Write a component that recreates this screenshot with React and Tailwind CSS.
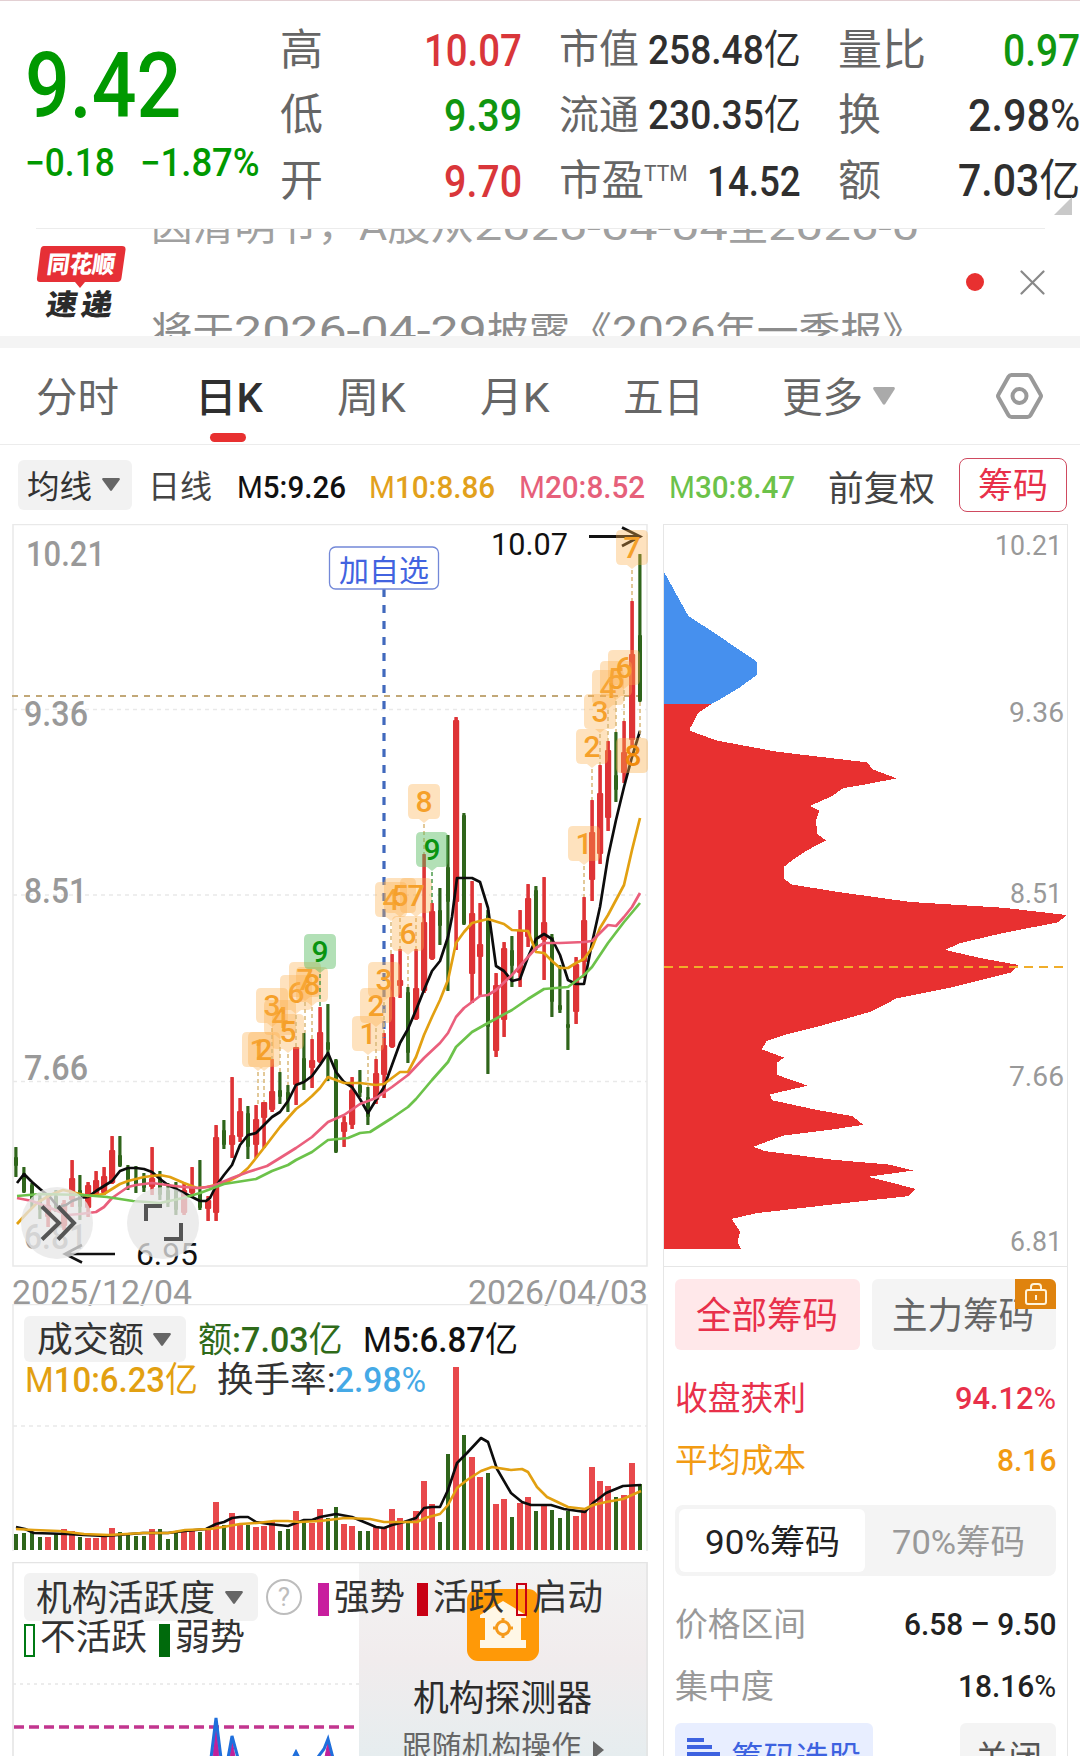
import React, { useLayoutEffect, useRef, useState } from "react";

// Text squeezed (or stretched) horizontally to the width of its box
const Fit = ({ children, className = "" }) => {
  const box = useRef(null);
  const inner = useRef(null);
  const [scale, setScale] = useState(1);

  useLayoutEffect(() => {
    setScale(box.current.clientWidth / inner.current.offsetWidth);
  }, [children]);

  return (
    <span ref={box} className={`block shrink-0 leading-none ${className}`}>
      <span
        ref={inner}
        className="inline-block whitespace-nowrap origin-left leading-none align-top"
        style={{ transform: `scaleX(${scale})` }}
      >
        {children}
      </span>
    </span>
  );
};

const Caret = ({ className = "" }) => (
  <svg className={className} viewBox="0 0 18 13" preserveAspectRatio="none">
    <path d="M1 0H17Q18.500 .5 17.500 2L10 12.300Q9 13.500 8 12.300L.5 2Q-.5 .5 1 0Z" fill="currentColor" />
  </svg>
);

// [up, high, low, body top, body bottom]
const candles = [
  [0, 1147, 1177, 1157, 1166], [0, 1167, 1193, 1173, 1192], [0, 1183, 1208, 1185, 1200], [0, 1193, 1219, 1198, 1210],
  [1, 1198, 1227, 1205, 1217], [0, 1190, 1212, 1196, 1208], [1, 1200, 1230, 1203, 1226], [1, 1160, 1207, 1178, 1200],
  [0, 1175, 1220, 1190, 1207], [1, 1182, 1217, 1185, 1208], [1, 1171, 1195, 1180, 1194], [1, 1167, 1195, 1176, 1193],
  [1, 1136, 1184, 1150, 1183], [0, 1136, 1167, 1155, 1166], [0, 1165, 1190, 1168, 1180], [0, 1166, 1193, 1178, 1186],
  [0, 1173, 1192, 1178, 1188], [1, 1147, 1195, 1178, 1187], [0, 1171, 1200, 1178, 1195], [0, 1183, 1207, 1190, 1203],
  [0, 1182, 1215, 1190, 1210], [1, 1183, 1215, 1190, 1213], [1, 1167, 1197, 1187, 1193], [0, 1160, 1210, 1193, 1208],
  [1, 1196, 1221, 1200, 1209], [1, 1125, 1221, 1137, 1213], [0, 1120, 1149, 1130, 1145], [1, 1077, 1158, 1135, 1145],
  [1, 1098, 1142, 1111, 1137], [0, 1106, 1159, 1113, 1147], [1, 1105, 1158, 1119, 1145], [1, 1102, 1148, 1102, 1118],
  [1, 1059, 1112, 1091, 1110], [0, 1072, 1104, 1090, 1097], [0, 1085, 1112, 1092, 1100], [1, 1047, 1105, 1047, 1085],
  [0, 1033, 1090, 1058, 1082], [1, 1039, 1088, 1060, 1068], [1, 1007, 1063, 1032, 1062], [0, 1004, 1081, 1042, 1050],
  [0, 1059, 1153, 1060, 1152], [1, 1116, 1147, 1122, 1132], [1, 1077, 1129, 1090, 1125], [0, 1070, 1097, 1085, 1093],
  [0, 1087, 1125, 1097, 1117], [1, 1059, 1104, 1073, 1100], [1, 1033, 1098, 1045, 1075], [1, 954, 1048, 997, 1047],
  [1, 949, 998, 980, 986], [0, 987, 1063, 992, 1053], [1, 949, 1020, 988, 1019], [1, 854, 993, 922, 991],
  [1, 903, 960, 911, 959], [0, 888, 945, 910, 926], [0, 835, 991, 867, 902], [1, 717, 950, 720, 902],
  [0, 813, 925, 815, 924], [1, 881, 1003, 913, 974], [1, 903, 996, 944, 957], [0, 910, 1074, 915, 1027],
  [1, 973, 1057, 985, 1051], [1, 942, 1037, 948, 1020], [0, 936, 987, 950, 966], [1, 910, 987, 930, 973],
  [1, 884, 947, 898, 937], [0, 886, 950, 890, 948], [1, 877, 980, 922, 940], [0, 934, 1017, 937, 1002],
  [0, 965, 1013, 1005, 1010], [0, 990, 1050, 1024, 1028], [1, 957, 1024, 964, 1012], [1, 897, 978, 920, 962],
  [1, 800, 901, 832, 880], [1, 765, 864, 793, 854], [1, 741, 831, 750, 818], [0, 732, 802, 775, 790],
  [1, 721, 783, 752, 773], [1, 601, 747, 654, 740], [0, 554, 702, 635, 701],
];

// turnover bar tops
const volumes = [
  1534, 1533, 1532, 1537, 1537, 1533, 1529, 1531, 1537, 1538, 1538, 1536, 1528, 1532, 1534, 1536, 1536, 1529, 1529, 1539,
  1531, 1530, 1530, 1532, 1529, 1502, 1525, 1513, 1525, 1525, 1527, 1526, 1521, 1531, 1529, 1511, 1520, 1523, 1509, 1518,
  1507, 1524, 1526, 1531, 1531, 1526, 1527, 1509, 1518, 1522, 1511, 1481, 1504, 1522, 1454, 1367, 1435, 1457, 1477, 1473,
  1504, 1499, 1517, 1503, 1497, 1511, 1506, 1510, 1518, 1511, 1516, 1510, 1467, 1481, 1486, 1497, 1495, 1463, 1484,
];

const ma5 =
  "17,1183 24,1174 32,1182 40,1189 50,1197 58,1207 66,1205 72,1201 80,1198 88,1197 96,1191 104,1186 112,1181 120,1171 128,1168 136,1168 144,1169 152,1172 160,1179 168,1185 176,1189 184,1193 192,1197 200,1201 206,1201 210,1198 216,1186 224,1175 232,1165 240,1145 248,1135 256,1133 264,1125 272,1117 280,1112 288,1101 296,1085 304,1082 312,1076 320,1065 328,1053 336,1072 344,1082 352,1087 360,1099 368,1113 376,1100 384,1087 392,1065 400,1043 408,1029 416,1010 424,990 432,971 440,961 448,937 452,917 457,878 472,878 480,882 488,908 496,966 504,971 512,981 520,979 528,957 536,939 544,934 552,939 560,955 568,980 576,984 584,984 592,943 600,907 608,857 616,820 624,787 632,757 640,731";
const ma10 =
  "17,1224 27,1213 37,1203 50,1195 63,1190 72,1192 88,1196 104,1194 112,1189 120,1184 128,1181 144,1177 160,1175 170,1177 184,1183 197,1188 207,1187 227,1182 240,1175 248,1168 256,1158 267,1144 280,1127 296,1109 304,1103 312,1096 320,1088 328,1077 336,1080 344,1083 360,1083 376,1085 384,1084 400,1072 408,1072 416,1057 424,1035 432,1017 440,1000 448,980 456,943 464,932 472,923 488,919 504,924 512,930 528,931 536,952 544,953 552,961 560,968 568,968 576,963 584,959 592,948 600,928 608,915 624,885 632,850 640,818";
const ma20 =
  "17,1198 32,1201 48,1207 67,1215 80,1214 96,1212 104,1207 112,1198 128,1187 136,1185 152,1183 167,1185 183,1187 200,1188 213,1186 232,1178 248,1172 267,1166 280,1158 296,1148 312,1137 328,1122 344,1115 360,1104 376,1098 392,1087 408,1075 424,1058 440,1043 448,1033 456,1017 464,1008 480,996 488,995 496,990 512,975 528,957 536,948 544,943 560,943 584,942 592,941 600,933 608,925 616,926 624,917 632,907 640,893";
const ma30 =
  "17,1196 40,1194 83,1195 107,1197 133,1201 160,1203 183,1198 200,1193 224,1184 256,1179 272,1171 288,1165 296,1160 312,1152 328,1140 348,1138 360,1133 370,1132 392,1118 408,1107 416,1099 432,1080 448,1062 456,1047 472,1032 488,1023 512,1010 528,999 544,989 568,987 584,975 592,967 608,943 624,922 640,903";

const vol5 =
  "16,1527 25,1529 34,1533 67,1534 84,1535 105,1536 143,1533 168,1533 185,1531 206,1529 216,1524 224,1522 232,1518 240,1517 248,1517 256,1522 269,1524 288,1526 296,1523 304,1520 312,1520 320,1517 336,1514 352,1517 364,1522 376,1527 384,1528 392,1525 404,1522 416,1518 424,1508 432,1507 440,1507 448,1490 457,1463 467,1453 481,1438 488,1442 497,1469 511,1493 522,1502 531,1505 551,1505 564,1509 585,1512 593,1503 606,1493 623,1486 641,1485";
const vol10 =
  "16,1529 34,1530 59,1531 84,1534 109,1535 143,1533 168,1533 185,1530 210,1529 223,1527 240,1524 257,1523 274,1521 288,1521 299,1522 320,1521 345,1518 370,1519 384,1522 404,1522 417,1522 425,1518 440,1514 448,1505 457,1488 467,1480 481,1471 492,1467 511,1470 522,1469 528,1472 537,1487 547,1497 568,1507 585,1509 593,1505 606,1502 623,1499 641,1491";

// [digit, center x, top, bottom of the leader line]
const badges = [
  [1, 258, 1032, 1105], [2, 264, 1032, 1102], [3, 272, 988, 1059], [4, 280, 1000, 1072], [5, 288, 1014, 1085],
  [6, 296, 975, 1047], [7, 305, 962, 1033], [8, 312, 967, 1039], [1, 368, 1016, 1087], [2, 376, 988, 1059],
  [3, 384, 962, 1033], [4, 391, 882, 954], [5, 400, 878, 949], [7, 416, 878, 949], [6, 408, 916, 987],
  [8, 424, 784, 854], [1, 584, 826, 897], [2, 592, 729, 800], [3, 600, 694, 765], [4, 608, 670, 741],
  [5, 616, 661, 732], [6, 624, 650, 721], [7, 632, 530, 601],
];

const Badge = ({ digit, x, y, end, green }) => (
  <g>
    <line x1={x} x2={x} y1={y + 40} y2={end} stroke={green ? "#4c9a4c" : "#d9b878"} strokeWidth="1.500" strokeDasharray="4 3" />
    <path
      d={`M${x - 11} ${y}h22q5 0 5 5v25q0 5 -5 5h-6l-5 4l-5 -4h-6q-5 0 -5 -5v-25q0 -5 5 -5z`}
      fill={green ? "#54bb5e" : "#fbb04c"}
      fillOpacity={green ? 0.45 : 0.36}
    />
    <text x={x} y={y + 27.5} textAnchor="middle" fontSize="30" fontWeight="500" fill={green ? "#0a9410" : "#f5a02a"}>
      {digit}
    </text>
  </g>
);

const AxisText = ({ x, y, w, size, children, ...rest }) => (
  <text x={x} y={y} fontSize={size} textLength={w} lengthAdjust="spacingAndGlyphs" {...rest}>
    {children}
  </text>
);

const KChart = () => (
  <svg className="block w-[636px] h-[743px]" viewBox="12 524 636 743">
    <rect x="13" y="524.500" width="634" height="741.500" fill="#fff" stroke="#e9e9e9" strokeWidth="1.500" />
    {[709.5, 895, 1081.5].map((y) => (
      <line key={y} x1="13" x2="647" y1={y} y2={y} stroke="#e9e9e9" strokeWidth="1.500" strokeDasharray="4 4" />
    ))}
    <line x1="12" x2="641" y1="696" y2="696" stroke="#c2a878" strokeWidth="2" strokeDasharray="6 6" />
    <g fill="#999" fontWeight="500">
      <AxisText x={26} y={566} w={79} size={35}>10.21</AxisText>
      <AxisText x={24} y={726} w={64} size={35}>9.36</AxisText>
      <AxisText x={24} y={903} w={63} size={35}>8.51</AxisText>
      <AxisText x={24} y={1080} w={64} size={35}>7.66</AxisText>
      <AxisText x={24} y={1248.5} w={63} size={35}>6.81</AxisText>
    </g>
    {candles.map(([up, high, low, top, bottom], i) => (
      <g key={i} fill={up ? "#de3336" : "#2f651b"}>
        <rect x={16 + i * 8 - 1.7} y={high} width={up ? 3.6 : 3.2} height={low - high} rx="0.500" />
        <rect x={16 + i * 8 - (up ? 3 : 2)} y={top} width={up ? 6.2 : 4} height={bottom - top} rx="1" />
      </g>
    ))}
    <g fill="none" strokeWidth="2.700" strokeLinejoin="round">
      <polyline points={ma5} stroke="#0c0c0c" />
      <polyline points={ma10} stroke="#e2a011" />
      <polyline points={ma20} stroke="#ea5f7c" />
      <polyline points={ma30} stroke="#6cc24a" />
    </g>
    <line x1="384" x2="384" y1="589" y2="1038" stroke="#4169bd" strokeWidth="3.200" strokeDasharray="8 8" />
    <rect x="329.500" y="547" width="109" height="42" rx="6" fill="#fff" stroke="#7388d8" strokeWidth="1.300" />
    <AxisText x={339} y={581} w={90} size={30} fill="#4263e0">加自选</AxisText>
    <AxisText x={491} y={555} w={77} size={31} fill="#111">10.07</AxisText>
    <path d="M589 536.500H640M622 527.500L640 536.500L622 546" fill="none" stroke="#111" strokeWidth="2.800" />
    {badges.map(([digit, x, y, end], i) => (
      <Badge key={i} digit={digit} x={x} y={y} end={end} />
    ))}
    <Badge digit={9} x={320} y={934} end={1007} green />
    <Badge digit={9} x={432} y={832} end={903} green />
    <line x1="640" x2="640" y1="702" y2="738" stroke="#d9b878" strokeWidth="1.500" strokeDasharray="4 3" />
    <path d="M621 738h22q5 0 5 5v25q0 5 -5 5h-22q-5 0 -5 -5v-25q0 -5 5 -5z" fill="#fbb04c" fillOpacity="0.400" />
    <text x="633" y="766" textAnchor="middle" fontSize="30" fontWeight="500" fill="#f08a0c">8</text>
    <AxisText x={136} y={1264.5} w={62} size={31} fill="#111">6.95</AxisText>
    <path d="M115 1254H65M82 1245L65 1254L82 1262.500" fill="none" stroke="#111" strokeWidth="2.600" />
    <g fill="#e6e6e6" fillOpacity="0.760">
      <circle cx="57" cy="1223" r="36" />
      <circle cx="163" cy="1223" r="36" />
    </g>
    <g fill="none" stroke="#555" strokeWidth="4">
      <path d="M42 1206.500L59 1223L42 1239.500M58 1206.500L74 1223L58 1239.500" />
      <path d="M146 1221V1206H162M181 1223V1239H164" />
    </g>
  </svg>
);

const chips =
  "42,380 183,380 145,398 120,430 120,435 200,455 380,478 650,500 670,515 740,533 650,545 580,553 545,570 480,590 508,600 498,620 502,648 528,661 470,682 425,703 403,715 401,740 425,752 570,768 780,788 1060,800 1250,815 1225,830 1060,852 930,873 885,887 1000,905 1105,918 1085,933 900,965 740,987 660,1015 520,1042 400,1063 350,1075 335,1092 402,1109 380,1120 382,1145 473,1167 360,1185 366,1197 500,1217 608,1230 640,1248 540,1258 400,1270 310,1293 345,1302 550,1320 720,1330 790,1342 655,1355 797,1380 775,1395 600,1408 320,1430 245,1442 270,1468 263,1490 272,1503 42,1503";

const ChipChart = () => (
  <svg className="block w-[403px] h-[741px]" viewBox="664 525 403 741">
    <g transform="translate(650 520) scale(0.3333 0.4847)" shapeRendering="crispEdges">
      <polygon points="42,107 115,198 180,227 318,291 320,293 320,320 270,345 215,368 183,380 42,380" fill="#4690ee" />
      <polygon points={chips} fill="#e83030" />
    </g>
    <line x1="664" x2="1064" y1="967" y2="967" stroke="#f0ad2a" strokeWidth="2" strokeDasharray="9 6" />
    <g fill="#999">
      <AxisText x={995} y={555} w={67} size={28}>10.21</AxisText>
      <AxisText x={1009} y={721.5} w={55} size={28}>9.36</AxisText>
      <AxisText x={1010} y={903} w={52} size={28}>8.51</AxisText>
      <AxisText x={1009} y={1085.5} w={55} size={28}>7.66</AxisText>
      <AxisText x={1010} y={1251} w={52} size={28}>6.81</AxisText>
    </g>
  </svg>
);

const VolumeChart = () => (
  <svg className="absolute inset-0 w-full h-full" viewBox="12 1304 636 247">
    <path d="M13 1551V1304.500H647V1551" fill="none" stroke="#e9e9e9" strokeWidth="1.500" />
    <line x1="13" x2="647" y1="1426" y2="1426" stroke="#e9e9e9" strokeWidth="1.500" strokeDasharray="4 4" />
    {volumes.map((top, i) => (
      <rect
        key={i}
        x={16 + i * 8 - (candles[i][0] ? 3 : 2)}
        y={top}
        width={candles[i][0] ? 6 : 4}
        height={1550 - top}
        fill={candles[i][0] ? "#e8494c" : "#2f651b"}
      />
    ))}
    <g fill="none" strokeWidth="2.600" strokeLinejoin="round">
      <polyline points={vol5} stroke="#0c0c0c" />
      <polyline points={vol10} stroke="#e2a011" />
    </g>
  </svg>
);

const ActivityChart = () => (
  <svg className="absolute inset-0 w-full h-full" viewBox="12 1562 636 194">
    <path d="M13 1757V1562.500H647V1757" fill="none" stroke="#e4e4e4" strokeWidth="1.500" />
    <line x1="13" x2="359" y1="1684" y2="1684" stroke="#e6e6e6" strokeWidth="1.500" strokeDasharray="3 4" />
    <line x1="14" x2="355" y1="1727" y2="1727" stroke="#c2358f" strokeWidth="3.400" strokeDasharray="10 5" />
    <path d="M213 1757L216 1722L219 1757ZM230 1757L232 1740L235 1757ZM325 1757L328 1742L331 1757Z" fill="#c0219a" stroke="#c0219a" />
    <path
      d="M211 1758L216 1718L221 1758M228 1758L232 1736L238 1758M293 1758L296 1752L299 1758M318 1757L324 1749L328 1739L333 1758"
      fill="none"
      stroke="#1f6fdc"
      strokeWidth="3"
    />
  </svg>
);

const Logo = () => (
  <svg className="w-[90px] h-[78px]" viewBox="0 0 90 78">
    <path d="M8 1H86Q90 1 89.500 5L85.500 33Q85 37 81 37H49L44 43L39 37H4Q.5 37 1 33L4.500 5Q5 1 8 1Z" fill="#e63036" />
    <text x="14" y="28.500" transform="skewX(-8)" fontSize="24" fontWeight="900" fill="#fff" textLength="68" lengthAdjust="spacingAndGlyphs">同花顺</text>
    <text x="20" y="70" transform="skewX(-9)" fontSize="29" fontWeight="900" fill="#2b2b2b" textLength="31" lengthAdjust="spacingAndGlyphs">速</text>
    <text x="55" y="70" transform="skewX(-9)" fontSize="29" fontWeight="900" fill="#2b2b2b" textLength="31" lengthAdjust="spacingAndGlyphs">递</text>
  </svg>
);

const Quote = () => (
  <section className="relative flex h-[228px] pt-[16px] border-t border-[#e3d0d3] text-[#2f2f2f]">
    <div className="w-[280px] pl-[25px] pt-[24px] text-[#009900]">
      <Fit className="w-[156px] text-[91px] font-medium">9.42</Fit>
      <div className="flex gap-[25px] mt-[12px] font-medium">
        <Fit className="w-[90px] text-[38px]">−0.18</Fit>
        <Fit className="w-[120px] text-[38px]">−1.87%</Fit>
      </div>
    </div>
    <div className="w-[242px]">
      <div className="flex h-[66px] items-center justify-between">
        <Fit className="w-[43px] text-[43px] text-[#666]">高</Fit>
        <Fit className="w-[98px] text-[45px] font-medium text-[#d9363a]">10.07</Fit>
      </div>
      <div className="flex h-[65px] items-center justify-between">
        <Fit className="w-[43px] text-[43px] text-[#666]">低</Fit>
        <Fit className="w-[78px] text-[45px] font-medium text-[#109610]">9.39</Fit>
      </div>
      <div className="flex h-[66px] items-center justify-between">
        <Fit className="w-[43px] text-[43px] text-[#666]">开</Fit>
        <Fit className="w-[78px] text-[45px] font-medium text-[#d9363a]">9.70</Fit>
      </div>
    </div>
    <div className="w-[242px] ml-[37px]">
      <div className="flex h-[66px] items-center justify-between">
        <Fit className="w-[80px] text-[40px] text-[#666]">市值</Fit>
        <Fit className="w-[153px] text-[41px] font-medium">258.48<span className="font-normal">亿</span></Fit>
      </div>
      <div className="flex h-[65px] items-center justify-between">
        <Fit className="w-[80px] text-[40px] text-[#666]">流通</Fit>
        <Fit className="w-[153px] text-[41px] font-medium">230.35<span className="font-normal">亿</span></Fit>
      </div>
      <div className="flex h-[66px] items-center">
        <Fit className="w-[85px] text-[42px] text-[#666]">市盈</Fit>
        <Fit className="w-[44px] text-[22px] text-[#666] -mt-3.5">TTM</Fit>
        <Fit className="w-[94px] text-[43px] font-medium ml-auto">14.52</Fit>
      </div>
    </div>
    <div className="w-[242px] ml-[37px]">
      <div className="flex h-[66px] items-center justify-between">
        <Fit className="w-[88px] text-[43px] text-[#666]">量比</Fit>
        <Fit className="w-[77px] text-[45px] font-medium text-[#109610]">0.97</Fit>
      </div>
      <div className="flex h-[65px] items-center justify-between">
        <Fit className="w-[43px] text-[43px] text-[#666]">换</Fit>
        <Fit className="w-[112px] text-[45px] font-medium">2.98<span className="font-normal">%</span></Fit>
      </div>
      <div className="flex h-[66px] items-center justify-between">
        <Fit className="w-[43px] text-[43px] text-[#666]">额</Fit>
        <Fit className="w-[122px] text-[44px] font-medium">7.03<span className="font-normal">亿</span></Fit>
      </div>
    </div>
    <svg className="absolute right-2 bottom-[13px] w-[18px] h-[18px]" viewBox="0 0 18 18">
      <path d="M18 0V18H0Z" fill="#c9c9c9" />
    </svg>
  </section>
);

const Notice = () => (
  <section className="flex h-[108px] pl-[36px] pr-[35px] overflow-hidden">
    <div className="flex w-full h-full border-t border-[#ececec]">
      <div className="pt-[16px] w-[90px] shrink-0">
        <Logo />
      </div>
      <div className="ml-[25px] w-[772px] shrink-0 h-[107px] overflow-hidden text-[38px]">
        <div className="flex -mt-[21px] text-[#a0a0a0]">
          <Fit className="w-[208px]">因清明节，</Fit>
          <Fit className="w-[115px]">A股从</Fit>
          <Fit className="w-[254px]">2026-04-04</Fit>
          <Fit className="w-[40px]">至</Fit>
          <Fit className="w-[151px]">2026-0</Fit>
        </div>
        <div className="flex mt-[66px] text-[#8c8c8c]">
          <Fit className="w-[83px]">将于</Fit>
          <Fit className="w-[253px]">2026-04-29</Fit>
          <Fit className="w-[125px]">披露《</Fit>
          <Fit className="w-[103px]">2026</Fit>
          <Fit className="w-[209px]">年一季报》</Fit>
        </div>
      </div>
      <div className="ml-auto flex items-center gap-[36px] h-[106px]">
        <span className="w-[18px] h-[18px] rounded-full bg-[#e83030]"></span>
        <svg className="w-[25px] h-[25px]" viewBox="0 0 25 25">
          <path d="M1.500 1.500L23.500 23.500M23.500 1.500L1.500 23.500" stroke="#888" strokeWidth="2.200" strokeLinecap="round" />
        </svg>
      </div>
    </div>
  </section>
);

const Tabs = () => (
  <nav className="flex h-[97px] items-center pl-[36px] border-b-[1.5px] border-[#ececec] text-[41px] text-[#666]">
    <Fit className="w-[83px] mt-[5px]">分时</Fit>
    <div className="relative ml-[76px] mt-[5px] text-[#2f2f2f]">
      <Fit className="w-[68px] font-medium">日K</Fit>
      <span className="absolute left-[15px] top-[55px] w-[36px] h-[9px] rounded-full bg-[#e83030]"></span>
    </div>
    <Fit className="w-[69px] ml-[74px] mt-[5px]">周K</Fit>
    <Fit className="w-[70px] ml-[74px] mt-[5px]">月K</Fit>
    <Fit className="w-[81px] ml-[73px] mt-[5px]">五日</Fit>
    <Fit className="w-[81px] ml-[78px] mt-[5px]">更多</Fit>
    <Caret className="w-[22px] h-[18px] ml-[10px] text-[#aaa]" />
    <svg className="w-[49px] h-[48px] ml-[100px]" viewBox="0 0 49 48" fill="none" stroke="#999" strokeWidth="4">
      <path d="M16.500 3H32.500Q34.500 3 35.500 4.700L45.500 22.500Q46.500 24 45.500 25.500L35.500 43.300Q34.500 45 32.500 45H16.500Q14.500 45 13.500 43.300L3.500 25.500Q2.500 24 3.500 22.500L13.500 4.700Q14.500 3 16.500 3Z" />
      <circle cx="24.500" cy="24" r="7" />
    </svg>
  </nav>
);

const Averages = () => (
  <div className="flex h-[79px] items-center pl-[18px] text-[32px] font-medium">
    <button className="flex items-center w-[114px] h-[50px] pl-[9px] rounded-md bg-[#f2f2f2] text-[#333] font-normal">
      <Fit className="w-[65px] mt-[4px] text-[32px]">均线</Fit>
      <Caret className="w-[18px] h-[13px] ml-[10px] text-[#666]" />
    </button>
    <Fit className="w-[64px] mt-[4px] font-normal text-[#444] ml-[16px]">日线</Fit>
    <Fit className="w-[109px] mt-[5px] ml-[25px] text-[#111]"><span className="font-normal">M</span>5:9.26</Fit>
    <Fit className="w-[126px] mt-[5px] ml-[23px] text-[#e2a11c]"><span className="font-normal">M</span>10:8.86</Fit>
    <Fit className="w-[126px] mt-[5px] ml-[24px] text-[#e6607a]"><span className="font-normal">M</span>20:8.52</Fit>
    <Fit className="w-[126px] mt-[5px] ml-[24px] text-[#6cc24a]"><span className="font-normal">M</span>30:8.47</Fit>
    <Fit className="w-[107px] mt-[10px] ml-[33px] text-[35px] font-normal text-[#444]">前复权</Fit>
    <button className="flex items-center justify-center w-[108px] h-[54px] ml-[24px] rounded-lg border-[1.5px] border-[#cf4a60] text-[#e8304a]">
      <Fit className="w-[70px] mt-[4px] text-[35px] font-normal">筹码</Fit>
    </button>
  </div>
);

const Volume = () => (
  <div className="relative h-[247px] pl-[12px] pt-[12px] text-[35px] font-medium">
    <VolumeChart />
    <div className="relative flex items-center h-[46px]">
      <button className="flex items-center w-[162px] h-[46px] pl-[12px] rounded-md bg-[#f2f2f2] text-[#333]">
        <Fit className="w-[107px] mt-[3px] font-normal">成交额</Fit>
        <Caret className="w-[18px] h-[13px] ml-[10px] text-[#666]" />
      </button>
      <Fit className="w-[145px] mt-[3px] ml-[12px] text-[#2f6b1a]"><span className="font-normal">额</span>:7.03<span className="font-normal">亿</span></Fit>
      <Fit className="w-[155px] mt-[3px] ml-[20px] text-[#111]"><span className="font-normal">M</span>5:6.87<span className="font-normal">亿</span></Fit>
    </div>
    <div className="relative flex items-center h-[36px]">
      <Fit className="w-[173px] ml-[1px] text-[#e2a011]"><span className="font-normal">M</span>10:6.23<span className="font-normal">亿</span></Fit>
      <Fit className="w-[118px] ml-[19px] font-normal text-[#333]">换手率:</Fit>
      <Fit className="w-[91px] text-[#45a9e6]">2.98<span className="font-normal">%</span></Fit>
    </div>
  </div>
);

const Activity = () => (
  <div className="relative h-[194px] mt-[11px] text-[36px] text-[#333]">
    <div className="absolute left-[347px] top-0 w-[289px] h-[194px] bg-linear-to-b from-[#f3f3f3] via-[#f1eced] to-[#e6edef] flex flex-col items-center">
      <svg className="w-[72px] h-[72px] mt-[27px] mr-[2px] shrink-0" viewBox="0 0 72 72">
        <rect width="72" height="72" rx="11" fill="#ff9907" />
        <path d="M36 12L59 26V29H54V51H59V59H13V51H18V29H13V26Z" fill="#fff7e6" />
        <g fill="none" stroke="#f59a1c" strokeWidth="3">
          <circle cx="36" cy="39" r="6.500" />
          <path d="M36 29V33M36 45V49M26 39H30M42 39H46" />
        </g>
      </svg>
      <Fit className="w-[179px] mt-[20px] mr-[2px] text-[#2b2b2b]">机构探测器</Fit>
      <div className="flex items-center mt-[15px] mr-[1px]">
        <Fit className="w-[179px] text-[31px] text-[#666]">跟随机构操作</Fit>
        <svg className="w-[11px] h-[18px] ml-[12px] mt-1" viewBox="0 0 11 18">
          <path d="M0 0L11 9L0 18Z" fill="#666" />
        </svg>
      </div>
    </div>
    <ActivityChart />
    <div className="relative flex items-center h-[48px] top-[11px] pl-[12px]">
      <button className="flex items-center w-[234px] h-[48px] pl-[12px] rounded-md bg-[#f2f2f2]">
        <Fit className="w-[179px] mt-[3px]">机构活跃度</Fit>
        <Caret className="w-[18px] h-[13px] ml-[10px] text-[#666]" />
      </button>
      <span className="flex items-center justify-center w-[36px] h-[36px] ml-[8px] rounded-full border-2 border-[#bdbdbd] text-[#bdbdbd] text-[26px] leading-none">?</span>
      <span className="w-[11px] h-[33px] ml-[16px] mt-1 bg-[#c81e9e]"></span>
      <Fit className="w-[71px] mt-[2px] ml-[5px]">强势</Fit>
      <span className="w-[11px] h-[33px] ml-[12px] mt-1 bg-[#c80014]"></span>
      <Fit className="w-[71px] mt-[2px] ml-[5px]">活跃</Fit>
      <span className="w-[11px] h-[33px] ml-[12px] mt-1 border-[2.500px] border-[#c80014]"></span>
      <Fit className="w-[71px] mt-[2px] ml-[5px]">启动</Fit>
    </div>
    <div className="relative flex items-center h-[34px] top-[11px] pl-[12px]">
      <span className="w-[11px] h-[33px] mt-1 border-[2.500px] border-[#007a14]"></span>
      <Fit className="w-[107px] ml-[5px]">不活跃</Fit>
      <span className="w-[11px] h-[33px] ml-[12px] mt-1 bg-[#006a0c]"></span>
      <Fit className="w-[70px] ml-[5px]">弱势</Fit>
    </div>
  </div>
);

const ChipPanel = () => (
  <aside className="w-[405px] ml-[15px] h-[1232px] border-[1.5px] border-b-0 border-[#e6e6e6]">
    <ChipChart />
    <div className="border-t border-[#e6e6e6] pl-[11px] pr-[11px] pt-[12px]">
      <div className="flex gap-[12px] h-[71px]">
        <button className="flex-1 flex items-center justify-center rounded-md bg-[#ffe8ea] text-[#e8304a]">
          <Fit className="w-[142px] mt-[4px] text-[37px]">全部筹码</Fit>
        </button>
        <button className="relative flex-1 flex items-center justify-center rounded-md bg-[#f4f4f4] text-[#666]">
          <Fit className="w-[142px] mt-[4px] mr-[2px] text-[37px]">主力筹码</Fit>
          <span className="absolute right-0 top-0 flex items-center justify-center w-[41px] h-[30px] rounded-tr-md bg-[#df830e]">
            <svg className="w-[24px] h-[24px]" viewBox="0 0 24 24" fill="none" stroke="#fff3da" strokeWidth="2">
              <rect x="2" y="8" width="20" height="14" rx="2" />
              <path d="M7 8V5Q7 2 10 2H14Q17 2 17 5V8M12 13V18" />
            </svg>
          </span>
        </button>
      </div>
      <div className="flex items-center justify-between h-[62px] mt-[17px] text-[#e8304a]">
        <Fit className="w-[131px] text-[33px]">收盘获利</Fit>
        <Fit className="w-[101px] text-[32px] font-medium">94.12<span className="font-normal">%</span></Fit>
      </div>
      <div className="flex items-center justify-between h-[62px] text-[#f29b13]">
        <Fit className="w-[131px] text-[33px]">平均成本</Fit>
        <Fit className="w-[59px] text-[32px] font-medium">8.16</Fit>
      </div>
      <div className="flex h-[71px] mt-[14px] p-[4px] rounded-lg bg-[#f4f4f4]">
        <div className="flex items-center justify-center w-[186px] rounded-md bg-white text-[#222]">
          <Fit className="w-[135px] mt-[2px] text-[34px]">90%筹码</Fit>
        </div>
        <div className="flex flex-1 items-center justify-center text-[#999]">
          <Fit className="w-[133px] mt-[2px] text-[34px]">70%筹码</Fit>
        </div>
      </div>
      <div className="flex items-center justify-between h-[62px] mt-[17px]">
        <Fit className="w-[131px] text-[33px] text-[#999]">价格区间</Fit>
        <Fit className="w-[152px] text-[32px] font-medium text-[#222]">6.58 – 9.50</Fit>
      </div>
      <div className="flex items-center justify-between h-[62px]">
        <Fit className="w-[99px] text-[33px] text-[#999]">集中度</Fit>
        <Fit className="w-[98px] text-[32px] font-medium text-[#222]">18.16<span className="font-normal">%</span></Fit>
      </div>
      <div className="flex justify-between h-[72px] mt-[6px]">
        <button className="flex items-center w-[198px] pl-[12px] rounded-md bg-[#e8eeff] text-[#3d62e0]">
          <svg className="w-[33px] h-[38px] mb-[5px]" viewBox="0 0 33 38" fill="#3d62e0">
            <path d="M0 0H17V4H0ZM0 7H25V11H0ZM0 14H33V18H0ZM0 21H25V25H0ZM0 28H17V32H0Z" />
          </svg>
          <Fit className="w-[130px] ml-[11px] mb-[2px] text-[33px]">筹码选股</Fit>
        </button>
        <button className="flex items-center justify-center w-[96px] rounded-md bg-[#f4f4f4] text-[#555]">
          <Fit className="w-[67px] mb-[2px] text-[34px]">关闭</Fit>
        </button>
      </div>
    </div>
  </aside>
);

const App = () => {
  return (
    <div className="w-[1080px] h-[1756px] overflow-hidden bg-white font-[Roboto,'Noto_Sans_CJK_SC',sans-serif]">
      <Quote />
      <Notice />
      <div className="h-[12px] bg-[#f4f4f4]"></div>
      <Tabs />
      <Averages />
      <main className="flex pl-[12px]">
        <div className="w-[636px]">
          <KChart />
          <div className="flex items-start justify-between h-[37px] pt-[8px] text-[34px] text-[#999]">
            <Fit className="w-[180px]">2025/12/04</Fit>
            <Fit className="w-[180px]">2026/04/03</Fit>
          </div>
          <Volume />
          <Activity />
        </div>
        <ChipPanel />
      </main>
    </div>
  );
};

export default App;
